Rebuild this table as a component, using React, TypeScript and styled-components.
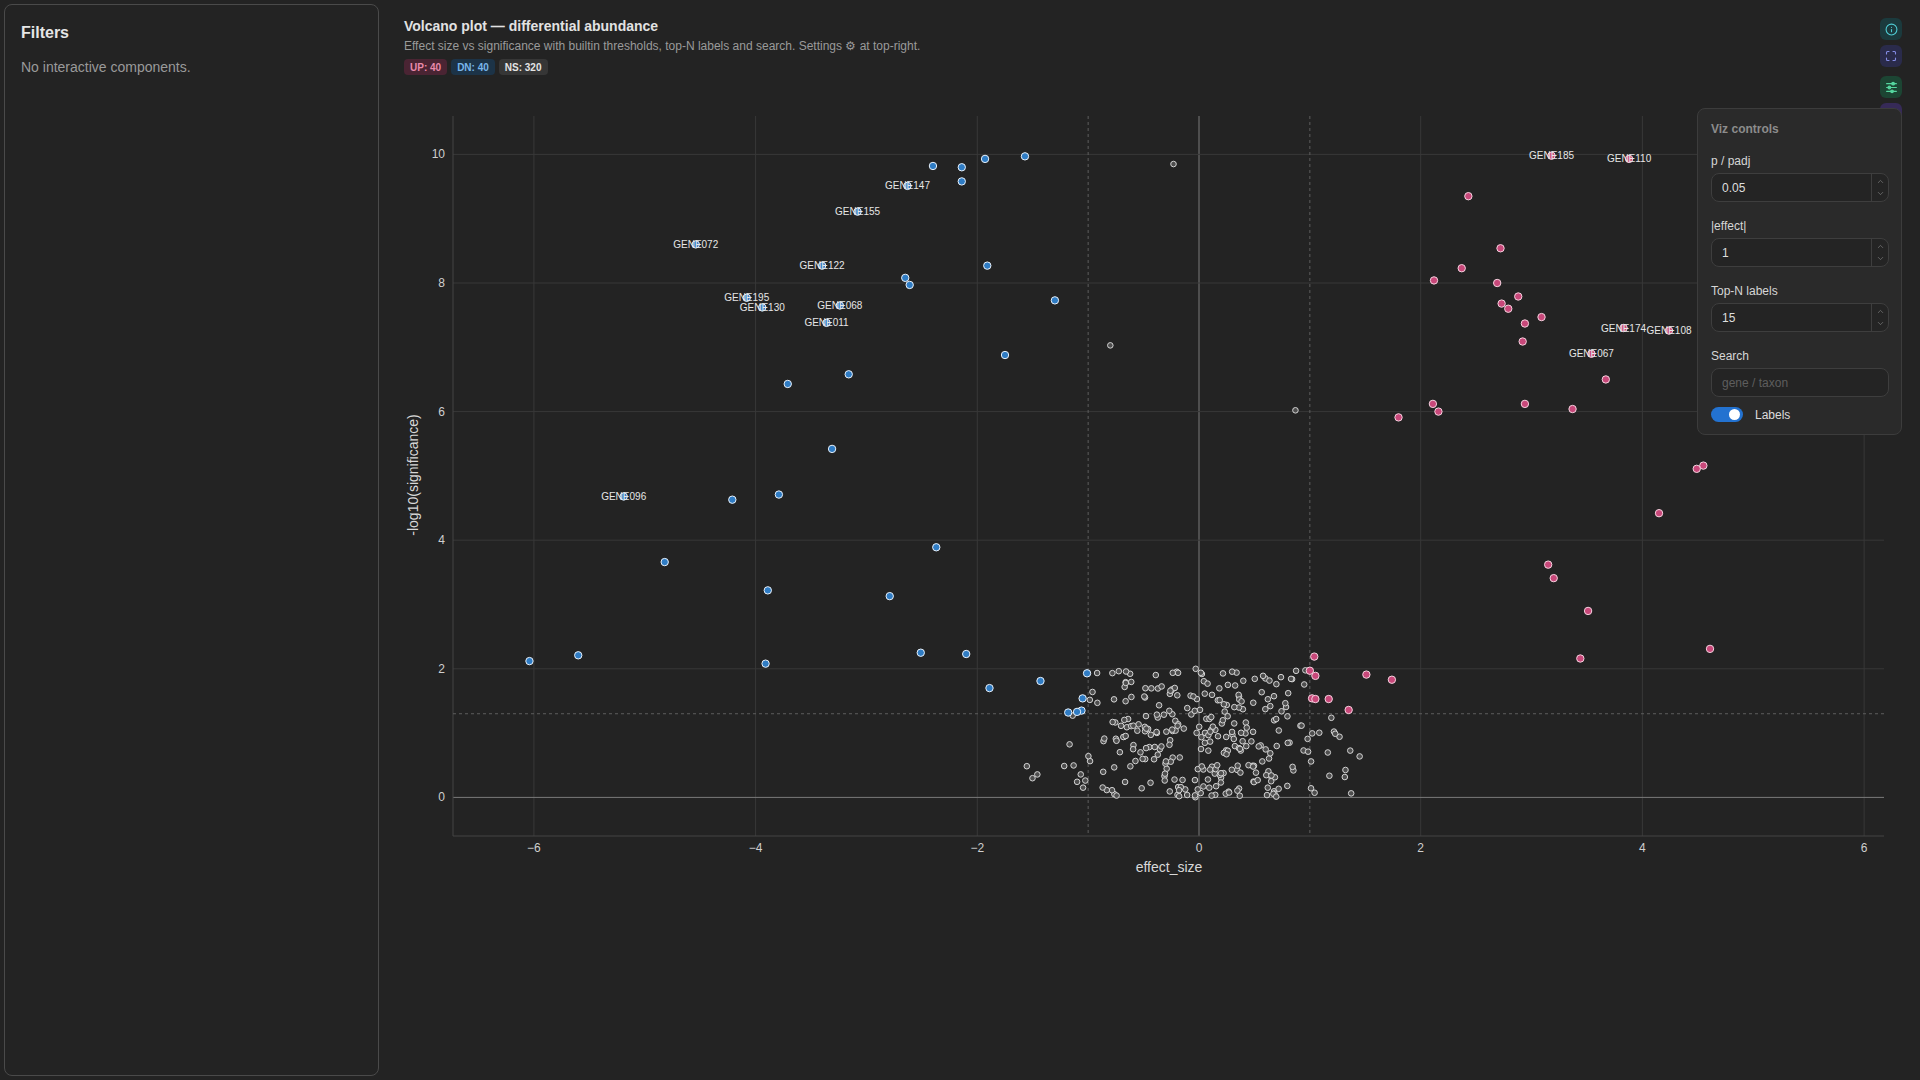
import React from 'react';
import styled, { createGlobalStyle } from 'styled-components';
import { Info, Maximize, ChevronUp, ChevronDown, Table2 } from 'lucide-react';

const GlobalStyle = createGlobalStyle`
  html, body {
    margin: 0;
    padding: 0;
    background: #232323;
    font-family: 'Liberation Sans', Arial, sans-serif;
    color: #ddd;
  }
  * { box-sizing: border-box; }
`;

type Pt = [number, number, string?];

const DOWN: Pt[] = [
  [-2.4, 9.82], [-2.14, 9.8], [-1.93, 9.93], [-1.57, 9.97], [-2.14, 9.58],
  [-2.63, 9.51, 'GENE147'], [-3.08, 9.11, 'GENE155'], [-4.54, 8.6, 'GENE072'],
  [-3.4, 8.27, 'GENE122'], [-1.91, 8.27], [-2.65, 8.08], [-2.61, 7.97],
  [-4.08, 7.77, 'GENE195'], [-3.94, 7.62, 'GENE130'], [-3.24, 7.65, 'GENE068'],
  [-3.36, 7.38, 'GENE011'], [-1.3, 7.73], [-1.75, 6.88], [-3.16, 6.58], [-3.71, 6.43],
  [-3.31, 5.42], [-5.19, 4.68, 'GENE096'], [-4.21, 4.63], [-3.79, 4.71], [-2.37, 3.89],
  [-4.82, 3.66], [-3.89, 3.22], [-2.79, 3.13], [-6.04, 2.12], [-5.6, 2.21],
  [-3.91, 2.08], [-2.51, 2.25], [-2.1, 2.23], [-1.89, 1.7], [-1.43, 1.81],
  [-1.01, 1.93], [-1.05, 1.54], [-1.18, 1.32], [-1.06, 1.35], [-1.1, 1.33],
];

const UP: Pt[] = [
  [3.18, 9.98, 'GENE185'], [3.88, 9.93, 'GENE110'], [2.43, 9.35], [2.72, 8.54],
  [2.37, 8.23], [2.12, 8.04], [2.69, 8.0], [2.88, 7.79], [2.73, 7.68], [2.79, 7.6],
  [3.09, 7.47], [2.94, 7.37], [3.83, 7.3, 'GENE174'], [4.24, 7.26, 'GENE108'],
  [2.92, 7.09], [3.54, 6.9, 'GENE067'], [3.67, 6.5], [2.11, 6.12], [2.94, 6.12],
  [2.16, 6.0], [3.37, 6.04], [1.8, 5.91], [4.55, 5.16], [4.49, 5.11], [4.15, 4.42],
  [3.15, 3.62], [3.2, 3.41], [3.51, 2.9], [4.61, 2.31], [3.44, 2.16], [1.04, 2.19],
  [1.51, 1.91], [1.74, 1.83], [1.0, 1.97], [1.05, 1.89], [1.02, 1.54], [1.05, 1.53],
  [1.17, 1.53], [1.35, 1.36],
];

// seeded cloud of non-significant points
const mulberry32 = (seed: number) => () => {
  seed |= 0;
  seed = (seed + 0x6d2b79f5) | 0;
  let t = Math.imul(seed ^ (seed >>> 15), 1 | seed);
  t = (t + Math.imul(t ^ (t >>> 7), 61 | t)) ^ t;
  return ((t ^ (t >>> 14)) >>> 0) / 4294967296;
};

const buildNs = (): Pt[] => {
  const rnd = mulberry32(20240611);
  const out: Pt[] = [[-0.23, 9.85], [-0.8, 7.03], [0.87, 6.02]];
  while (out.length < 320) {
    const u1 = Math.max(rnd(), 1e-9);
    const u2 = rnd();
    const x = Math.sqrt(-2 * Math.log(u1)) * Math.cos(2 * Math.PI * u2) * 0.68;
    const y = rnd() * 2.0;
    if (Math.abs(x) > 1.65) continue;
    if (Math.abs(x) >= 1 && y >= 1.301) continue;
    out.push([x, y]);
  }
  return out;
};

const NS = buildNs();

// plot geometry (svg px)
const W = 1512;
const H = 800;
const L = 49;
const R = 1480;
const T = 31;
const B = 751;
const sx = (x: number) => 795 + x * 110.85;
const sy = (y: number) => 712.4 - y * 64.3;
const XT = [-6, -4, -2, 0, 2, 4, 6];
const YT = [0, 2, 4, 6, 8, 10];

const SettingsGlyph = () => (
  <svg width="13" height="13" viewBox="0 0 24 24" fill="none" stroke="currentColor" strokeWidth="2.2" strokeLinecap="round">
    <line x1="3" y1="5" x2="21" y2="5" />
    <line x1="3" y1="12" x2="21" y2="12" />
    <line x1="3" y1="19" x2="21" y2="19" />
    <circle cx="15" cy="5" r="2.4" fill="currentColor" />
    <circle cx="8" cy="12" r="2.4" fill="currentColor" />
    <circle cx="13" cy="19" r="2.4" fill="currentColor" />
  </svg>
);

const NumberField = ({ label, value }: { label: string; value: string }) => (
  <Field>
    <FieldLabel>{label}</FieldLabel>
    <NumberBox>
      <BoxValue>{value}</BoxValue>
      <Spinner>
        <ChevronUp size={9} strokeWidth={1.6} />
        <ChevronDown size={9} strokeWidth={1.6} />
      </Spinner>
    </NumberBox>
  </Field>
);

const fmt = (v: number) => (v < 0 ? `\u2212${Math.abs(v)}` : `${v}`);

export default function App() {
  const labelled = [...DOWN, ...UP].filter((p) => p[2]);

  return (
    <>
      <GlobalStyle />
      <Page>
        <Sidebar>
          <SideTitle>Filters</SideTitle>
          <SideText>No interactive components.</SideText>
        </Sidebar>

        <Main>
          <Title>Volcano plot — differential abundance</Title>
          <Subtitle>
            Effect size vs significance with builtin thresholds, top-N labels and search. Settings ⚙ at top-right.
          </Subtitle>
          <BadgeRow>
            <Badge $tone="up">UP: 40</Badge>
            <Badge $tone="down">DN: 40</Badge>
            <Badge $tone="ns">NS: 320</Badge>
          </BadgeRow>

          <PlotSvg viewBox={`0 0 ${W} ${H}`} width={W} height={H}>
            {XT.map((v) => (
              <GridLine key={`gx${v}`} x1={sx(v)} x2={sx(v)} y1={T} y2={B} $zero={v === 0} />
            ))}
            {YT.map((v) => (
              <GridLine key={`gy${v}`} x1={L} x2={R} y1={sy(v)} y2={sy(v)} $zero={v === 0} />
            ))}
            <AxisLine x1={L} x2={L} y1={T} y2={B} />
            <AxisLine x1={L} x2={R} y1={B} y2={B} />
            <Threshold x1={sx(-1)} x2={sx(-1)} y1={T} y2={B} />
            <Threshold x1={sx(1)} x2={sx(1)} y1={T} y2={B} />
            <Threshold x1={L} x2={R} y1={sy(1.301)} y2={sy(1.301)} />

            {XT.map((v) => (
              <TickLabel key={`tx${v}`} x={sx(v)} y={B + 16} textAnchor="middle">
                {fmt(v)}
              </TickLabel>
            ))}
            {YT.map((v) => (
              <TickLabel key={`ty${v}`} x={L - 8} y={sy(v) + 4} textAnchor="end">
                {v}
              </TickLabel>
            ))}
            <AxisTitle x={765} y={787} textAnchor="middle">effect_size</AxisTitle>
            <AxisTitle x={14} y={390} textAnchor="middle" transform="rotate(-90 14 390)">
              -log10(significance)
            </AxisTitle>

            {NS.map((p, i) => (
              <Dot key={`n${i}`} cx={sx(p[0])} cy={sy(p[1])} r={2.8} $kind="ns" />
            ))}
            {DOWN.map((p, i) => (
              <Dot key={`d${i}`} cx={sx(p[0])} cy={sy(p[1])} r={3.7} $kind="down" />
            ))}
            {UP.map((p, i) => (
              <Dot key={`u${i}`} cx={sx(p[0])} cy={sy(p[1])} r={3.7} $kind="up" />
            ))}
            {labelled.map((p) => (
              <GeneLabel key={p[2]} x={sx(p[0])} y={sy(p[1]) + 3.5} textAnchor="middle">
                {p[2]}
              </GeneLabel>
            ))}
          </PlotSvg>

          <Toolbar>
            <ToolButton $tone="cyan"><Info size={13} strokeWidth={2} /></ToolButton>
            <ToolButton $tone="indigo"><Maximize size={12} strokeWidth={2.2} /></ToolButton>
            <ToolButton $tone="green" $gap><SettingsGlyph /></ToolButton>
            <ToolButton $tone="violet"><Table2 size={13} strokeWidth={2} /></ToolButton>
          </Toolbar>

          <Panel>
            <PanelTitle>Viz controls</PanelTitle>
            <NumberField label="p / padj" value="0.05" />
            <NumberField label="|effect|" value="1" />
            <NumberField label="Top-N labels" value="15" />
            <Field>
              <FieldLabel>Search</FieldLabel>
              <SearchBox placeholder="gene / taxon" />
            </Field>
            <ToggleRow>
              <Toggle>
                <Knob />
              </Toggle>
              <ToggleLabel>Labels</ToggleLabel>
            </ToggleRow>
          </Panel>
        </Main>
      </Page>
    </>
  );
}

const Page = styled.div`
  display: flex;
  gap: 25px;
  height: 100vh;
  padding: 4px;
`;

const Sidebar = styled.aside`
  width: 375px;
  flex-shrink: 0;
  border: 1px solid #4a4a4a;
  border-radius: 8px;
  padding: 18px 16px;
`;

const SideTitle = styled.div`
  font-size: 16px;
  font-weight: 700;
  line-height: 20px;
  color: #e6e6e6;
`;

const SideText = styled.div`
  margin-top: 15px;
  font-size: 14px;
  line-height: 18px;
  color: #9a9a9a;
`;

const Main = styled.main`
  position: relative;
  flex: 1;
  min-width: 0;
  padding-top: 13px;
`;

const Title = styled.div`
  font-size: 14px;
  font-weight: 700;
  line-height: 18px;
  color: #e2e2e2;
`;

const Subtitle = styled.div`
  margin-top: 4px;
  font-size: 12px;
  line-height: 15px;
  color: #9a9a9a;
`;

const BadgeRow = styled.div`
  display: flex;
  gap: 4px;
  margin-top: 5px;
`;

const badgeTones = {
  up: { bg: '#4a2433', fg: '#e98aab' },
  down: { bg: '#1c3347', fg: '#78b6ea' },
  ns: { bg: '#363636', fg: '#e4e4e4' },
};

const Badge = styled.span<{ $tone: keyof typeof badgeTones }>`
  display: inline-flex;
  align-items: center;
  height: 16px;
  padding: 0 6px;
  border-radius: 4px;
  font-size: 10px;
  font-weight: 700;
  background: ${(p) => badgeTones[p.$tone].bg};
  color: ${(p) => badgeTones[p.$tone].fg};
`;

const PlotSvg = styled.svg`
  display: block;
  margin-top: 10px;
  font-family: 'Liberation Sans', Arial, sans-serif;
`;

const GridLine = styled.line<{ $zero?: boolean }>`
  stroke: ${(p) => (p.$zero ? '#7a7a7a' : '#383838')};
  stroke-width: 1;
`;

const AxisLine = styled.line`
  stroke: #454545;
  stroke-width: 1;
`;

const Threshold = styled.line`
  stroke: #5e5e5e;
  stroke-width: 1;
  stroke-dasharray: 3 3;
`;

const TickLabel = styled.text`
  font-size: 12px;
  fill: #cfcfcf;
`;

const AxisTitle = styled.text`
  font-size: 14px;
  fill: #d8d8d8;
`;

const dotTones = {
  ns: { fill: '#4e4e4e', stroke: '#d4d4d4' },
  down: { fill: '#2f7cc4', stroke: '#eaf2fb' },
  up: { fill: '#c8487a', stroke: '#f6d3e0' },
};

const Dot = styled.circle<{ $kind: keyof typeof dotTones }>`
  fill: ${(p) => dotTones[p.$kind].fill};
  stroke: ${(p) => dotTones[p.$kind].stroke};
  stroke-width: 1;
`;

const GeneLabel = styled.text`
  font-size: 10px;
  fill: #e6e6e6;
`;

const Toolbar = styled.div`
  position: absolute;
  top: 14px;
  right: 14px;
  display: flex;
  flex-direction: column;
  gap: 5px;
`;

const toolTones = {
  cyan: { bg: '#1b3a3d', fg: '#4fcbd3' },
  indigo: { bg: '#2a2b4b', fg: '#858de6' },
  green: { bg: '#1c4533', fg: '#55d69f' },
  violet: { bg: '#362a57', fg: '#a98cf6' },
};

const ToolButton = styled.div<{ $tone: keyof typeof toolTones; $gap?: boolean }>`
  width: 22px;
  height: 22px;
  border-radius: 6px;
  display: flex;
  align-items: center;
  justify-content: center;
  margin-top: ${(p) => (p.$gap ? '4px' : '0')};
  background: ${(p) => toolTones[p.$tone].bg};
  color: ${(p) => toolTones[p.$tone].fg};
`;

const Panel = styled.div`
  position: absolute;
  top: 104px;
  right: 14px;
  z-index: 2;
  width: 205px;
  padding: 12px 12px 12px 13px;
  background: #2a2a2a;
  border: 1px solid #3c3c3c;
  border-radius: 8px;
  display: flex;
  flex-direction: column;
  gap: 16px;
`;

const PanelTitle = styled.div`
  font-size: 12px;
  font-weight: 700;
  line-height: 16px;
  color: #8c8c8c;
`;

const Field = styled.div`
  display: flex;
  flex-direction: column;
  gap: 4px;
`;

const FieldLabel = styled.div`
  font-size: 12px;
  line-height: 16px;
  color: #d6d6d6;
`;

const NumberBox = styled.div`
  display: flex;
  height: 29px;
  border: 1px solid #3e3e3e;
  border-radius: 8px;
  background: #242424;
  overflow: hidden;
`;

const BoxValue = styled.div`
  flex: 1;
  display: flex;
  align-items: center;
  padding-left: 10px;
  font-size: 12px;
  color: #dedede;
`;

const Spinner = styled.div`
  width: 17px;
  border-left: 1px solid #3e3e3e;
  display: flex;
  flex-direction: column;
  align-items: center;
  justify-content: space-evenly;
  color: #8a8a8a;
`;

const SearchBox = styled.input`
  height: 29px;
  border: 1px solid #3e3e3e;
  border-radius: 8px;
  background: #242424;
  padding: 0 10px;
  font-family: 'Liberation Sans', Arial, sans-serif;
  font-size: 12px;
  color: #dedede;
  outline: none;

  &::placeholder {
    color: #5e5e5e;
  }
`;

const ToggleRow = styled.div`
  display: flex;
  align-items: center;
  gap: 12px;
  margin-top: -6px;
`;

const Toggle = styled.div`
  width: 32px;
  height: 15px;
  border-radius: 8px;
  background: #2372d0;
  display: flex;
  align-items: center;
  justify-content: flex-end;
  padding: 0 3px;
`;

const Knob = styled.div`
  width: 11px;
  height: 11px;
  border-radius: 50%;
  background: #fff;
`;

const ToggleLabel = styled.span`
  font-size: 12px;
  color: #dcdcdc;
`;
